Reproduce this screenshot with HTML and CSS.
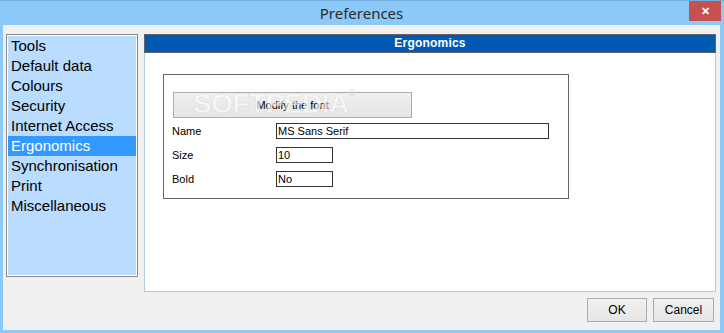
FILE: index.html
```html
<!DOCTYPE html>
<html lang="en">
<head>
    <meta charset="UTF-8">
    <title>Preferences</title>
    <link rel="stylesheet" href="styles.css">
</head>
<body>
    <div class="window">
        <div class="titlebar">
            <span class="title">Preferences</span>
            <span class="close">&#x2715;</span>
        </div>
        <div class="client">
            <div class="main">
                <ul class="sections">
                    <li>Tools</li>
                    <li>Default data</li>
                    <li>Colours</li>
                    <li>Security</li>
                    <li>Internet Access</li>
                    <li class="selected">Ergonomics</li>
                    <li>Synchronisation</li>
                    <li>Print</li>
                    <li>Miscellaneous</li>
                </ul>
                <div class="panel">
                    <div class="panel-head">Ergonomics</div>
                    <div class="group">
                        <button class="btn wide">Modify the font</button>
                        <div class="field">
                            <label>Name</label>
                            <div class="input long">MS Sans Serif</div>
                        </div>
                        <div class="field">
                            <label>Size</label>
                            <div class="input short">10</div>
                        </div>
                        <div class="field">
                            <label>Bold</label>
                            <div class="input short">No</div>
                        </div>
                        <span class="watermark">SOFTPEDIA<sup>&reg;</sup></span>
                    </div>
                </div>
            </div>
            <div class="footer">
                <button class="btn ok">OK</button>
                <button class="btn cancel">Cancel</button>
            </div>
        </div>
    </div>
</body>
</html>
```

FILE: styles.css
```css
* {
    box-sizing: border-box;
}
body {
    margin: 0;
    font-family: "Liberation Sans", Arial, sans-serif;
    color: #000;
}
.window {
    width: 724px;
    height: 333px;
    background: #8cc8f8;
    border-top: 1px solid #72aee0;
    padding: 0 4px 3px 3px;
    display: flex;
    flex-direction: column;
}
.titlebar {
    height: 24px;
    position: relative;
    display: flex;
    align-items: center;
    justify-content: center;
}
.title {
    font-family: "Noto Sans", sans-serif;
    font-size: 15px;
    color: #2b2b2b;
}
.close {
    position: absolute;
    right: -1px;
    top: 0;
    width: 32px;
    height: 20px;
    background: #c75050;
    color: #fff;
    font-size: 11px;
    font-weight: bold;
    display: flex;
    align-items: center;
    justify-content: center;
}
.client {
    flex: 1;
    background: #f0f0f0;
    padding: 9px 0 0 3px;
    display: flex;
    flex-direction: column;
}
.main {
    display: flex;
    gap: 6px;
    align-items: flex-start;
}
.sections {
    list-style: none;
    margin: 0;
    padding: 1px;
    width: 132px;
    height: 243px;
    border: 1px solid #8a8a8a;
    background: #b9dcff;
    box-shadow: inset 0 0 0 1px #fff;
    font-size: 15px;
}
.sections li {
    height: 20px;
    line-height: 20px;
    padding-left: 3px;
    color: #000;
}
.sections li.selected {
    background: #3399ff;
    color: #fff;
}
.panel {
    width: 572px;
    height: 258px;
    background: #fff;
    border: 1px solid #b4c8dc;
    border-top: none;
}
.panel-head {
    height: 19px;
    margin: 0 -1px;
    background: #005ab4;
    border: 1px solid #646464;
    color: #fff;
    font-weight: bold;
    font-size: 12px;
    text-align: center;
    line-height: 17px;
    letter-spacing: 0.2px;
}
.group {
    position: relative;
    margin: 21px 0 0 18px;
    width: 406px;
    height: 125px;
    border: 1px solid #646464;
    padding: 17px 9px 0 8px;
}
.btn {
    font-family: "Liberation Sans", Arial, sans-serif;
    font-size: 11px;
    color: #000;
    background: linear-gradient(#f0f0f0, #e5e5e5);
    border: 1px solid #adadad;
    padding: 0;
}
.wide {
    display: block;
    width: 239px;
    height: 26px;
    margin-left: 1px;
    margin-bottom: 1px;
}
.field {
    display: flex;
    align-items: center;
    height: 24px;
}
.field label {
    width: 104px;
    font-size: 11px;
}
.input {
    height: 16px;
    border: 1px solid #333;
    background: #fff;
    font-size: 11px;
    line-height: 14px;
    padding-left: 1px;
}
.long {
    width: 273px;
}
.short {
    width: 57px;
}
.watermark {
    position: absolute;
    left: 29px;
    top: 13px;
    font-size: 28px;
    font-weight: bold;
    color: rgba(255, 255, 255, 0.6);
    -webkit-text-stroke: 1px rgba(200, 200, 200, 0.3);
    letter-spacing: -0.5px;
    pointer-events: none;
}
.watermark sup {
    font-size: 9px;
    vertical-align: top;
}
.footer {
    display: flex;
    justify-content: flex-end;
    gap: 6px;
    padding: 6px 6px 0 0;
}
.footer .btn {
    height: 24px;
    font-size: 12px;
}
.ok {
    width: 60px;
}
.cancel {
    width: 61px;
}
```
